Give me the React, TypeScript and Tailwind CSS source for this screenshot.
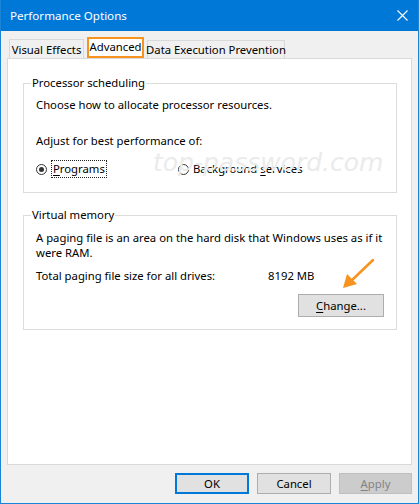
import React from 'react';

const FONT = { fontFamily: '"Noto Sans", "Open Sans", sans-serif' };

const Radio: React.FC<{ checked?: boolean }> = ({ checked }) => (
  <span className="w-[11px] h-[11px] rounded-full border border-[#333] bg-white flex items-center justify-center shrink-0">
    {checked && <span className="w-[5px] h-[5px] rounded-full bg-[#333]"></span>}
  </span>
);

export default function App() {
  return (
    <div
      className="relative w-[419px] h-[504px] bg-[#f0f0f0] border-x border-b border-[#1883d7] flex flex-col text-[11.3px] text-black overflow-hidden whitespace-nowrap"
      style={FONT}
    >
      {/* Title bar */}
      <div className="h-[31px] bg-[#0078d7] flex items-center justify-between pl-[9px] pr-[10px] text-white text-[11.6px] shrink-0">
        <span>Performance Options</span>
        <svg width="11" height="11" viewBox="0 0 11 11">
          <path d="M0.5 0.5 L10.5 10.5 M10.5 0.5 L0.5 10.5" stroke="#fff" strokeWidth="1.1" />
        </svg>
      </div>

      <div className="flex-1 flex flex-col px-[6px] pt-[6px] pb-[9px]">
        {/* Tabs */}
        <div className="h-[21px] flex items-end pl-[2px] shrink-0">
          <div className="h-[19px] w-[75px] border-t border-x border-[#d9d9d9] bg-[#f0f0f0] flex items-center justify-center leading-none pt-[1px]">
            Visual Effects
          </div>
          <div className="h-[21px] w-[57px] ml-[3px] border-2 border-[#f7931e] bg-white flex items-center justify-center leading-none pb-[1px]">
            Advanced
          </div>
          <div className="h-[18px] w-[138px] ml-[3px] border-t border-x border-[#d9d9d9] bg-[#f0f0f0] flex items-center justify-center leading-none pt-[1px]">
            Data Execution Prevention
          </div>
        </div>

        {/* Tab panel */}
        <div className="flex-1 bg-white border border-[#d9d9d9] flex flex-col">
          <fieldset className="ml-[15px] w-[374px] mt-[16px] h-[118px] border border-[#dcdcdc] pl-[12px]">
            <legend className="ml-[-5px] px-[1px] leading-[16px]">Processor scheduling</legend>
            <p className="pt-[6px] leading-[16px]">Choose how to allocate processor resources.</p>
            <p className="mt-[20px] leading-[16px]">Adjust for best performance of:</p>
            <div className="mt-[11px] h-[18px] flex items-center">
              <div className="w-[142px] flex items-center">
                <Radio checked />
                <span className="ml-[4px] px-[1px] h-[18px] flex items-center border border-dotted border-[#222]">
                  <span className="underline underline-offset-2">P</span>rograms
                </span>
              </div>
              <Radio />
              <span className="ml-[4px]">
                Background <span className="underline underline-offset-2">s</span>ervices
              </span>
            </div>
          </fieldset>

          <fieldset className="ml-[15px] w-[374px] mt-[14px] h-[123px] border border-[#dcdcdc] pl-[12px] pr-[6px]">
            <legend className="ml-[-5px] px-[1px] leading-[16px]">Virtual memory</legend>
            <p className="pt-[7px] leading-[15px] whitespace-normal">
              A paging file is an area on the hard disk that Windows uses as if it
              <br />
              were RAM.
            </p>
            <div className="mt-[8px] flex leading-[16px]">
              <span className="w-[232px]">Total paging file size for all drives:</span>
              <span>8192 MB</span>
            </div>
            <div className="mt-[10px] flex justify-end pr-[6px]">
              <button className="w-[86px] h-[23px] bg-[#e1e1e1] border border-[#adadad] leading-none">
                <span className="underline underline-offset-2">C</span>hange...
              </button>
            </div>
          </fieldset>
        </div>

        {/* Dialog buttons */}
        <div className="mt-[8px] flex justify-end gap-[8px] shrink-0">
          <button className="w-[74px] h-[21px] bg-[#e1e1e1] border-2 border-[#0078d7] leading-none">OK</button>
          <button className="w-[74px] h-[21px] bg-[#e1e1e1] border border-[#adadad] leading-none">Cancel</button>
          <button className="w-[73px] h-[21px] bg-[#cccccc] border border-[#bfbfbf] text-[#838383] leading-none">
            <span className="underline underline-offset-2">A</span>pply
          </button>
        </div>
      </div>

      {/* Watermark */}
      <div
        className="absolute left-[152px] top-[144px] text-[25px] italic text-[#ebebeb] whitespace-nowrap pointer-events-none"
        style={{ fontFamily: '"DejaVu Sans", sans-serif' }}
      >
        top-password.com
      </div>

      {/* Annotation arrow */}
      <svg className="absolute left-[336px] top-[254px] pointer-events-none" width="44" height="40" viewBox="0 0 44 40">
        <path d="M36 6 L13 28" stroke="#f7931e" strokeWidth="2.5" strokeLinecap="round" />
        <path d="M6 34 L10 20 L20 30 Z" fill="#f7931e" />
      </svg>
    </div>
  );
}
